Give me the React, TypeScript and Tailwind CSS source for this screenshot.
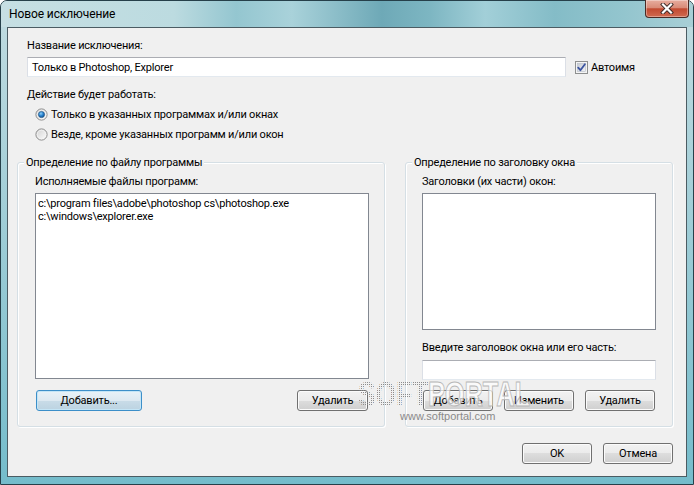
import React from "react";

function Btn({ label, className = "", focused = false }: { label: string; className?: string; focused?: boolean }) {
  return (
    <div
      className={`h-[21px] rounded-[3px] border flex items-center justify-center leading-none text-black ${
        focused
          ? "border-[#3c8fc9] bg-[linear-gradient(#e8f2f8_0%,#dde9f1_50%,#c9dce8_50%,#bcd3e1_100%)] shadow-[inset_0_0_0_1px_#c4e5f6]"
          : "border-[#707070] bg-[linear-gradient(#f2f2f2_0%,#ebebeb_50%,#dddddd_50%,#cfcfcf_100%)] shadow-[inset_0_0_0_1px_#fbfbfb]"
      } ${className}`}
    >
      {label}
    </div>
  );
}

function Group({ title, className = "", children }: { title: string; className?: string; children: React.ReactNode }) {
  return (
    <div className={`relative rounded-[3px] border border-[#d5dfe5] shadow-[inset_1px_1px_0_#ffffff,1px_1px_0_#ffffff] ${className}`}>
      <span className="absolute left-[6px] -top-[8px] px-[2px] bg-[#f0f0f0] leading-[15px] whitespace-nowrap">{title}</span>
      {children}
    </div>
  );
}

function Radio({ checked, id }: { checked: boolean; id: string }) {
  return (
    <svg width="13" height="13" viewBox="0 0 13 13" className="shrink-0">
      <defs>
        <linearGradient id={`rg${id}`} x1="0" y1="0" x2="1" y2="1">
          <stop offset="0" stopColor="#cfcfcf" />
          <stop offset="1" stopColor="#ffffff" />
        </linearGradient>
        <radialGradient id={`rd${id}`} cx="0.4" cy="0.35" r="0.7">
          <stop offset="0" stopColor="#8fd0f7" />
          <stop offset="0.5" stopColor="#2a84d0" />
          <stop offset="1" stopColor="#0c4f8e" />
        </radialGradient>
      </defs>
      <circle cx="6.5" cy="6.5" r="5.6" fill={`url(#rg${id})`} stroke="#8b8b8b" strokeWidth="1" />
      <circle cx="6.5" cy="6.5" r="4.3" fill="none" stroke="#f4f4f4" strokeWidth="0.8" />
      {checked && <circle cx="6.5" cy="6.5" r="3.1" fill={`url(#rd${id})`} stroke="#1f4f7c" strokeWidth="0.6" />}
    </svg>
  );
}

function Check() {
  return (
    <svg width="13" height="13" viewBox="0 0 13 13" className="shrink-0">
      <defs>
        <linearGradient id="cbg" x1="0" y1="0" x2="1" y2="1">
          <stop offset="0" stopColor="#c7cbd3" />
          <stop offset="1" stopColor="#f3f4f6" />
        </linearGradient>
      </defs>
      <rect x="0.5" y="0.5" width="12" height="12" fill="#f4f4f4" stroke="#8e8f8f" />
      <rect x="2.5" y="2.5" width="8" height="8" fill="url(#cbg)" stroke="#b6bcc6" strokeWidth="0.6" />
      <path d="M3.2 6.6 L5.4 9.2 L9.9 3.3" fill="none" stroke="#3c54a0" strokeWidth="1.8" strokeLinecap="round" strokeLinejoin="round" />
    </svg>
  );
}

function CloseBtn() {
  return (
    <div className="-mt-px mr-[4px] w-[44px] h-[18px] rounded-b-[4px] border border-t-0 border-[#4a2a24] bg-[linear-gradient(#e7ad9f_0%,#d98b78_45%,#c24a31_52%,#cf6a50_100%)] shadow-[inset_0_0_0_1px_rgba(255,255,255,0.35)] flex items-center justify-center">
      <svg width="14" height="11" viewBox="0 0 14 11">
        <path d="M3 1.5 L11 9.5 M11 1.5 L3 9.5" stroke="#3b2a28" strokeWidth="4" strokeLinecap="square" />
        <path d="M3 1.5 L11 9.5 M11 1.5 L3 9.5" stroke="#ffffff" strokeWidth="2.2" strokeLinecap="square" />
      </svg>
    </div>
  );
}

function Watermark() {
  return (
    <svg width="180" height="32" viewBox="0 0 180 32" className="absolute left-[355px] top-[378px] pointer-events-none overflow-visible">
      <defs>
        <pattern id="wmdots" x="0" y="0" width="2" height="2" patternUnits="userSpaceOnUse">
          <rect x="0" y="0" width="1" height="1" fill="#8c8c8c" />
        </pattern>
      </defs>
      <text
        x="3"
        y="28"
        fontFamily="'Liberation Sans', sans-serif"
        fontWeight="bold"
        fontSize="35"
        textLength="70"
        lengthAdjust="spacingAndGlyphs"
        fill="url(#wmdots)"
      >
        SOFT
      </text>
      <text
        x="73"
        y="28"
        fontFamily="'Liberation Sans', sans-serif"
        fontWeight="bold"
        fontSize="35"
        textLength="102"
        lengthAdjust="spacingAndGlyphs"
        fill="rgba(255,255,255,0.7)"
        stroke="#b8b8b8"
        strokeWidth="1"
      >
        PORTAL
      </text>
    </svg>
  );
}

export default function App() {
  return (
    <div className="w-[694px] h-[485px] font-['Roboto','Noto_Sans',sans-serif] text-[11px] tracking-[-0.2px] text-black relative overflow-hidden bg-white">
      <div className="w-full h-full rounded-t-[7px] border border-[#26404a] bg-[linear-gradient(180deg,#c1dce1_0%,#a4cfd8_40%,#74bccb_100%)] flex flex-col">
        <div className="h-[26px] shrink-0 flex items-start justify-between rounded-t-[6px] bg-[linear-gradient(90deg,#c6dfe3_0%,#bcdbe0_25%,#94c6d0_34%,#a9d2da_42%,#6ea9b7_55%,#7db6c2_62%,#a2cfd8_70%,#84bcc7_80%,#93c5ce_90%,#a8cfd6_100%)]">
          <span className="self-center pl-[8px] text-[12px] tracking-[-0.1px] leading-[16px] text-black">Новое исключение</span>
          <CloseBtn />
        </div>
        <div className="flex-1 px-[6px] pb-[7px] flex">
          <div className="flex-1 border border-[#4b5c63] bg-[#f0f0f0] flex flex-col">
            <div className="pt-[10px] pl-[19px] flex flex-col">
              <div className="leading-[15px]">Название исключения:</div>
              <div className="mt-[4px] flex items-center">
                <div className="w-[539px] h-[20px] bg-white border border-[#dbdfe6] border-t-[#abadb3] border-b-[#e3e9ef] pl-[4px] flex items-center leading-none">
                  Только в Photoshop, Explorer
                </div>
                <div className="ml-[9px] flex items-center">
                  <Check />
                  <span className="ml-[3px] leading-[15px]">Автоимя</span>
                </div>
              </div>
              <div className="mt-[10px] leading-[15px]">Действие будет работать:</div>
              <div className="mt-[5px] pl-[8px] h-[15px] flex items-center">
                <Radio checked id="a" />
                <span className="ml-[3px] leading-[15px]">Только в указанных программах и/или окнах</span>
              </div>
              <div className="mt-[5px] pl-[8px] h-[15px] flex items-center">
                <Radio checked={false} id="b" />
                <span className="ml-[3px] leading-[15px]">Везде, кроме указанных программ и/или окон</span>
              </div>
            </div>

            <div className="mt-[20px] pl-[9px] flex gap-[20px]">
              <Group title="Определение по файлу программы" className="w-[368px] h-[265px]">
                <div className="pt-[11px] pl-[17px] flex flex-col">
                  <div className="leading-[15px]">Исполняемые файлы программ:</div>
                  <div className="mt-[4px] w-[334px] h-[186px] bg-white border border-[#828790] pl-[2px] pt-[3px] leading-[13px]">
                    <div>c:\program files\adobe\photoshop cs\photoshop.exe</div>
                    <div>c:\windows\explorer.exe</div>
                  </div>
                  <div className="mt-[11px] w-[334px] px-[1px] flex justify-between">
                    <Btn label="Добавить..." focused className="w-[106px]" />
                    <Btn label="Удалить" className="w-[71px]" />
                  </div>
                </div>
              </Group>
              <Group title="Определение по заголовку окна" className="w-[268px] h-[265px]">
                <div className="pt-[11px] pl-[16px] flex flex-col">
                  <div className="leading-[15px]">Заголовки (их части) окон:</div>
                  <div className="mt-[4px] w-[234px] h-[137px] bg-white border border-[#828790]" />
                  <div className="mt-[10px] leading-[15px]">Введите заголовок окна или его часть:</div>
                  <div className="mt-[5px] w-[234px] h-[20px] bg-white border border-[#dbdfe6] border-t-[#abadb3] border-b-[#e3e9ef]" />
                  <div className="mt-[10px] pl-[1px] flex gap-[11px]">
                    <Btn label="Добавить" className="w-[70px]" />
                    <Btn label="Изменить" className="w-[70px]" />
                    <Btn label="Удалить" className="w-[70px]" />
                  </div>
                </div>
              </Group>
            </div>

            <div className="mt-[16px] pr-[13px] flex justify-end gap-[11px]">
              <Btn label="OK" className="w-[70px]" />
              <Btn label="Отмена" className="w-[70px]" />
            </div>
          </div>
        </div>
      </div>

      <Watermark />
      <div className="absolute left-[400px] top-[410px] pointer-events-none text-[11px] leading-[12px] tracking-normal text-[#8a8a8a] font-['Liberation_Sans',sans-serif]">
        www.softportal.com
      </div>
    </div>
  );
}
